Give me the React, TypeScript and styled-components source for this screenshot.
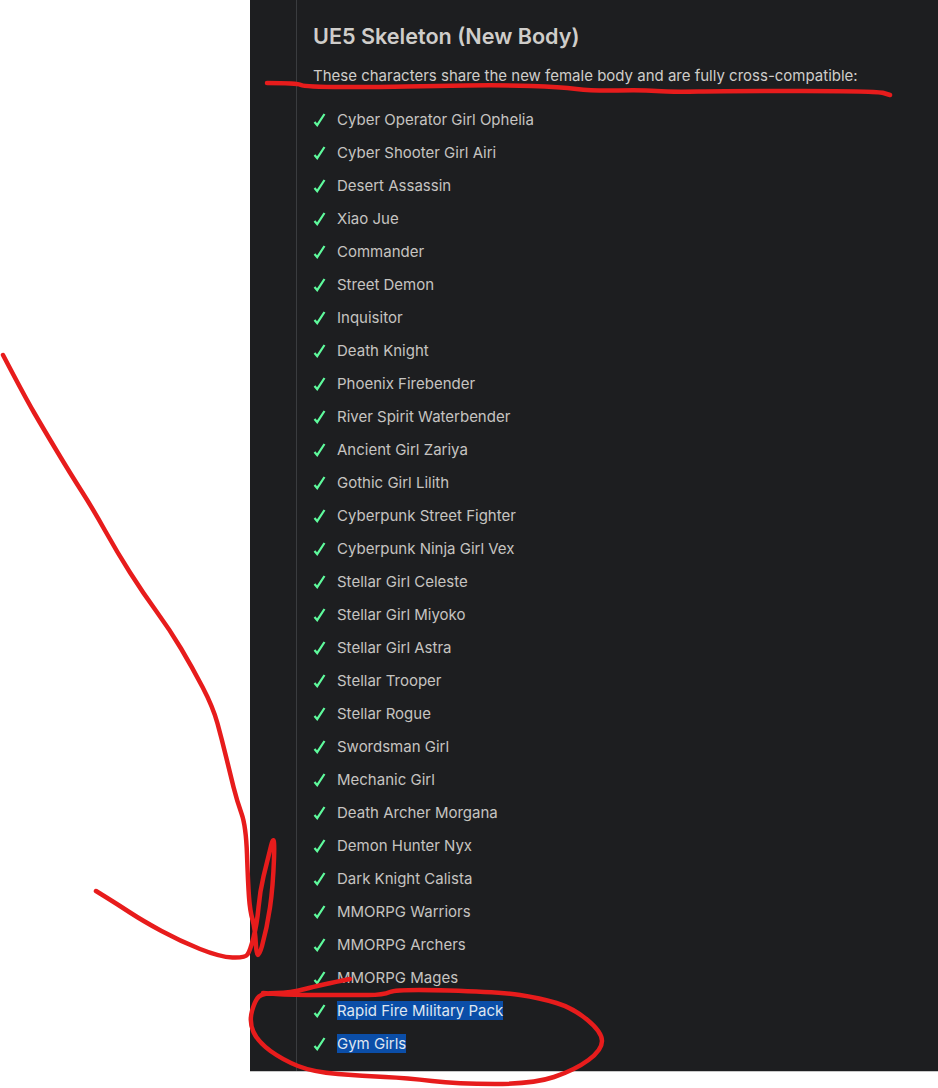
import styled, { createGlobalStyle } from "styled-components";

const GlobalStyle = createGlobalStyle`
	html, body {
		margin: 0;
		padding: 0;
		background: #ffffff;
	}
`;

const Page = styled.div`
	position: relative;
	width: 938px;
	height: 1088px;
	overflow: hidden;
	font-family: Inter, "Noto Sans", sans-serif;
`;

const Panel = styled.main`
	box-sizing: border-box;
	width: 688px;
	height: 1072px;
	margin-left: 250px;
	padding-left: 46px;
	background: #1d1e20;
	border-bottom: 1px solid #c8c8c8;
`;

const Content = styled.section`
	box-sizing: border-box;
	height: 100%;
	padding: 23px 0 0 16px;
	border-left: 1px solid #3a3c3f;
`;

const Title = styled.h2`
	margin: 0 0 16px;
	font-size: 21.6px;
	line-height: 26px;
	font-weight: 600;
	color: #cfcdca;
`;

const Intro = styled.p`
	margin: 0 0 16px;
	font-size: 15px;
	line-height: 22px;
	color: #cfcdca;
`;

const List = styled.ul`
	margin: 0;
	padding: 0;
	list-style: none;
`;

const Row = styled.li`
	display: flex;
	align-items: center;
	height: 33px;
	font-size: 15px;
	color: #c6c4c1;
`;

const Check = styled.svg`
	width: 24px;
	height: 14px;
	flex: none;
	fill: none;
	stroke: #5ffb9d;
	stroke-width: 2.2;
`;

const Picked = styled.span<{ $selected?: boolean }>`
	background: ${(p) => (p.$selected ? "#0b4ea8" : "transparent")};
	color: ${(p) => (p.$selected ? "#dfe6f0" : "inherit")};
`;

const Ink = styled.svg`
	position: absolute;
	inset: 0;
	pointer-events: none;
	fill: none;
	stroke: #e71c1c;
	stroke-width: 4.5;
	stroke-linecap: round;
	stroke-linejoin: round;
`;

const names = [
	"Cyber Operator Girl Ophelia",
	"Cyber Shooter Girl Airi",
	"Desert Assassin",
	"Xiao Jue",
	"Commander",
	"Street Demon",
	"Inquisitor",
	"Death Knight",
	"Phoenix Firebender",
	"River Spirit Waterbender",
	"Ancient Girl Zariya",
	"Gothic Girl Lilith",
	"Cyberpunk Street Fighter",
	"Cyberpunk Ninja Girl Vex",
	"Stellar Girl Celeste",
	"Stellar Girl Miyoko",
	"Stellar Girl Astra",
	"Stellar Trooper",
	"Stellar Rogue",
	"Swordsman Girl",
	"Mechanic Girl",
	"Death Archer Morgana",
	"Demon Hunter Nyx",
	"Dark Knight Calista",
	"MMORPG Warriors",
	"MMORPG Archers",
	"MMORPG Mages",
	"Rapid Fire Military Pack",
	"Gym Girls",
];

const selected = ["Rapid Fire Military Pack", "Gym Girls"];

// hand-drawn marks, smoothed through the midpoints of the points
function smooth(pts: number[][]) {
	let d = `M${pts[0][0]} ${pts[0][1]}`;
	for (let i = 1; i < pts.length - 1; i++) {
		const mx = (pts[i][0] + pts[i + 1][0]) / 2;
		const my = (pts[i][1] + pts[i + 1][1]) / 2;
		d += ` Q${pts[i][0]} ${pts[i][1]} ${mx} ${my}`;
	}
	const last = pts[pts.length - 1];
	return d + ` L${last[0]} ${last[1]}`;
}

const underline = [
	[267, 83], [297, 83], [305, 87], [383, 87], [430, 86], [503, 85], [560, 87], [593, 91],
	[643, 90], [670, 92], [727, 91], [877, 91], [890, 95],
];

const arrow = [
	[3, 355], [25, 397], [43, 428], [70, 473], [93, 509], [117, 552], [143, 593], [170, 630],
	[192, 667], [213, 707], [222, 740], [230, 773], [237, 801], [246, 826], [248, 883], [250, 911],
	[255, 928], [257, 964], [267, 928], [273, 887], [275, 830], [267, 862], [260, 891], [257, 924],
	[250, 951], [245, 958], [220, 957], [180, 941], [143, 921], [117, 904], [96, 891],
];

const loop = [
	[350, 979], [320, 985], [290, 993], [263, 993], [255, 1000], [249, 1022], [258, 1042], [283, 1060],
	[313, 1072], [363, 1076], [407, 1078], [457, 1084], [533, 1084], [575, 1070], [602, 1050], [602, 1032],
	[573, 1008], [540, 998], [500, 992], [397, 989], [383, 995], [353, 995], [290, 995], [263, 993],
];

export default function App() {
	return (
		<Page>
			<GlobalStyle />
			<Panel>
				<Content>
					<Title>UE5 Skeleton (New Body)</Title>
					<Intro>These characters share the new female body and are fully cross-compatible:</Intro>
					<List>
						{names.map((name) => (
							<Row key={name}>
								<Check viewBox="0 0 24 14">
									<path d="M1.5 9 L4.2 12.2 L11.5 1" />
								</Check>
								<Picked $selected={selected.includes(name)}>{name}</Picked>
							</Row>
						))}
					</List>
				</Content>
			</Panel>
			<Ink width="938" height="1088" viewBox="0 0 938 1088">
				<path d={smooth(underline)} />
				<path d={smooth(arrow)} />
				<path d={smooth(loop)} />
			</Ink>
		</Page>
	);
}
